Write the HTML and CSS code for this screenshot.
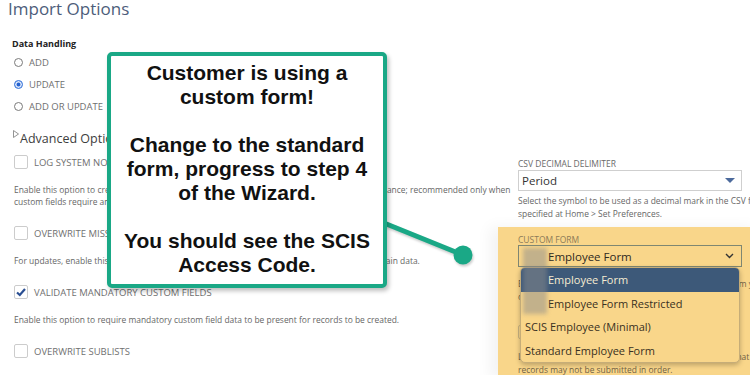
FILE: index.html
```html
<!DOCTYPE html>
<html lang="en">
<head>
  <meta charset="UTF-8" />
  <meta name="viewport" content="width=device-width, initial-scale=1.0"/>
  <title>Import Options</title>
  <link rel="stylesheet" href="styles.css">
</head>
<body>
  <h1>Import Options</h1>

  <div class="content">
    <div class="left">
      <div class="group-title">Data Handling</div>
      <div class="radio"><span class="dot"></span>Add</div>
      <div class="radio"><span class="dot on"></span>Update</div>
      <div class="radio"><span class="dot"></span>Add or Update</div>

      <div class="adv">
        <svg class="tri" width="6" height="8" viewBox="0 0 6 8"><path d="M0.5 0.5 L5.5 4 L0.5 7.5 Z" fill="none" stroke="#888" stroke-width="0.9"/></svg>
        Advanced Options
      </div>

      <div class="opt first">
        <div class="check"><span class="box"></span>Log System Notes for Custom Fields</div>
        <p class="desc">Enable this option to create system notes for fields set by the import. May slow import performance; recommended only when<br>custom fields require an audit trail of their changes.</p>
      </div>
      <div class="opt">
        <div class="check"><span class="box"></span>Overwrite Missing Fields</div>
        <p class="desc">For updates, enable this option to clear fields left empty in the file; disable it for fields that contain data.</p>
      </div>
      <div class="opt">
        <div class="check"><span class="box checked"><svg width="12" height="12" viewBox="0 0 12 12"><path d="M2 6.5 L4.8 9 L10 3" fill="none" stroke="#2a4f93" stroke-width="2.2"/></svg></span>Validate Mandatory Custom Fields</div>
        <p class="desc">Enable this option to require mandatory custom field data to be present for records to be created.</p>
      </div>
      <div class="opt">
        <div class="check"><span class="box"></span>Overwrite Sublists</div>
      </div>
    </div>

    <div class="right">
      <div class="label">CSV Decimal Delimiter</div>
      <div class="select">Period<span class="caret"></span></div>
      <p class="desc">Select the symbol to be used as a decimal mark in the CSV file, if different from the one<br>specified at Home &gt; Set Preferences.</p>

      <div class="highlight">
        <div class="label">Custom Form</div>
        <div class="select focus">
          <span class="redact"></span>
          Employee Form
          <svg class="chev" width="9" height="6" viewBox="0 0 9 6"><path d="M1 1 L4.5 4.5 L8 1" fill="none" stroke="#333" stroke-width="1.4"/></svg>
          <ul class="menu">
            <li class="sel pad">Employee Form</li>
            <li class="pad">Employee Form Restricted</li>
            <li>SCIS Employee (Minimal)</li>
            <li>Standard Employee Form</li>
          </ul>
        </div>
        <p class="desc">Employee records are imported with the fields of the form you pick; use one with all mapped fields<br>on it, or values for missing fields will not be saved.</p>
        <div class="check"><span class="box"></span>Run Server SuiteScript and Trigger Workflows</div>
        <p class="desc">Leave this option cleared if the import relies on scripts that link back to<br>records may not be submitted in order.</p>
      </div>
    </div>
  </div>

  <svg class="pointer" width="750" height="375" viewBox="0 0 750 375">
    <line x1="384" y1="223" x2="463" y2="255" stroke="#1aa886" stroke-width="5"/>
    <circle cx="463" cy="255" r="9.5" fill="#1aa886"/>
  </svg>

  <div class="callout">
    <p>Customer is using a<br>custom form!<br><br>Change to the standard<br>form, progress to step 4<br>of the Wizard.<br><br>You should see the SCIS<br>Access Code.</p>
  </div>
</body>
</html>
```

FILE: styles.css
```css
body {
  margin: 0;
  width: 750px;
  height: 375px;
  overflow: hidden;
  position: relative;
  font-family: "Open Sans", "Liberation Sans", sans-serif;
  background: #fff;
  color: #666;
}
h1 {
  margin: 0;
  padding-left: 8px;
  font-size: 17px;
  font-weight: 400;
  line-height: 18px;
  color: #4d5d7a;
}
.content {
  display: grid;
  grid-template-columns: 510px 224px;
  column-gap: 8px;
  margin-top: 19px;
}
.left {
  padding-left: 12px;
}
.group-title {
  font-size: 9px;
  font-weight: 700;
  line-height: 14px;
  color: #222;
}
.radio {
  display: flex;
  align-items: center;
  height: 22px;
  padding-left: 2px;
  font-size: 9.5px;
  text-transform: uppercase;
  color: #707070;
}
.dot {
  width: 9px;
  height: 9px;
  box-sizing: border-box;
  border: 1px solid #7a7a7a;
  border-radius: 50%;
  margin-right: 6px;
}
.dot.on {
  border-color: #4f86e0;
  background: #2563d0;
  box-shadow: inset 0 0 0 1.5px #dfe9fb;
}
.adv {
  display: flex;
  align-items: center;
  height: 20px;
  margin-top: 11px;
  font-size: 12.5px;
  color: #3d3d3d;
}
.tri {
  align-self: flex-start;
  margin: 2px 1px 0 1px;
}
.opt {
  margin-top: 17px;
}
.opt.first {
  margin-top: 6px;
}
.check {
  display: flex;
  align-items: center;
  height: 16px;
  padding-left: 2px;
  font-size: 9.5px;
  text-transform: uppercase;
  color: #707070;
}
.box {
  width: 14px;
  height: 14px;
  box-sizing: border-box;
  border: 1px solid #cccccc;
  border-radius: 2px;
  margin-right: 6px;
  background: #fff;
  display: flex;
  align-items: center;
  justify-content: center;
}
.desc {
  margin: 14px 0 0;
  padding-left: 2px;
  font-size: 8.45px;
  line-height: 12px;
  color: #666;
  white-space: nowrap;
}

.right {
  padding-top: 121px;
}
.label {
  font-size: 8.5px;
  line-height: 12px;
  text-transform: uppercase;
  color: #6a6a6a;
}
.select {
  position: relative;
  height: 21px;
  box-sizing: border-box;
  border: 1px solid #cfcfcf;
  display: flex;
  align-items: center;
  padding-left: 3px;
  font-size: 11.5px;
  color: #333;
}
.caret {
  position: absolute;
  right: 6px;
  top: 7px;
  border-left: 5px solid transparent;
  border-right: 5px solid transparent;
  border-top: 5px solid #4c6a9c;
}
.right .desc {
  margin-top: 3px;
  padding-left: 0;
  line-height: 13px;
}

.highlight {
  margin: 7px -20px 0 -20px;
  padding: 7px 20px 0;
  height: 146px;
  background: #f9d68a;
  box-shadow: -8px 0 14px rgba(0, 0, 0, 0.05);
}
.highlight .label {
  line-height: 11px;
  color: #8c7b58;
}
.highlight .select {
  height: 22px;
  border: 1.5px solid #7f8772;
  padding-left: 29px;
  color: #2f2a1f;
}
.highlight .desc {
  margin-top: 10px;
  color: #6f6146;
}
.highlight .check {
  margin-top: 21px;
  padding-left: 0;
  color: #7a6c4f;
}
.highlight .box {
  background: transparent;
  border-color: #c9b27f;
}
.highlight .check + .desc {
  margin-top: 10px;
}
.chev {
  position: absolute;
  right: 7px;
  top: 7px;
}
.redact {
  position: absolute;
  left: 4px;
  top: 2px;
  width: 24px;
  height: 66px;
  background: rgba(140, 140, 140, 0.5);
  filter: blur(2px);
  z-index: 3;
}
.menu {
  position: absolute;
  top: 21px;
  left: 1px;
  right: 1px;
  margin: 0;
  padding: 0;
  list-style: none;
  background: #f9d68a;
  border: 1px solid #c6ad78;
  border-radius: 5px;
  box-shadow: 0 2px 5px rgba(0, 0, 0, 0.25);
  overflow: hidden;
  z-index: 2;
}
.menu li {
  height: 23.5px;
  line-height: 23.5px;
  padding-left: 4px;
  font-size: 11px;
  color: #3a3122;
}
.menu li.pad {
  padding-left: 27px;
}
.menu li.sel {
  background: #3d5979;
  color: #f6ecd2;
}

.pointer {
  position: absolute;
  left: 0;
  top: 0;
  pointer-events: none;
  filter: drop-shadow(1px 2px 1px rgba(0, 0, 0, 0.2));
}
.callout {
  position: absolute;
  left: 107px;
  top: 52px;
  width: 280px;
  height: 236px;
  box-sizing: border-box;
  border: 4px solid #1aa886;
  border-radius: 5px;
  background: #fff;
  box-shadow: 2px 3px 4px rgba(0, 0, 0, 0.25);
  display: flex;
  align-items: center;
  justify-content: center;
}
.callout p {
  margin: 0 0 2px;
  font-family: "Liberation Sans", Arial, sans-serif;
  font-weight: 700;
  font-size: 21px;
  line-height: 24px;
  text-align: center;
  color: #111;
}
```
